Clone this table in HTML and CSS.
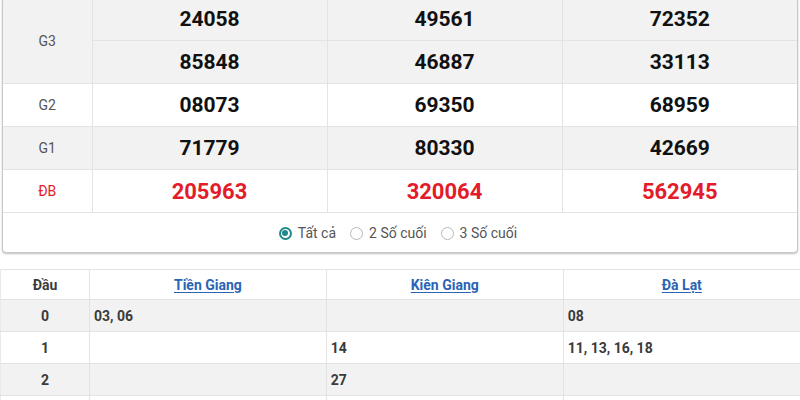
FILE: index.html
```html
<!DOCTYPE html>
<html>
<head>
<meta charset="utf-8">
<link rel="stylesheet" href="styles.css">
</head>
<body>
<div class="page">
  <div class="card">
    <table class="prizes">
      <colgroup><col class="c-label"><col class="c-num"><col class="c-num"><col class="c-num"></colgroup>
      <tr class="gray"><td class="label" rowspan="2">G3</td><td>24058</td><td>49561</td><td>72352</td></tr>
      <tr class="gray"><td>85848</td><td>46887</td><td>33113</td></tr>
      <tr><td class="label">G2</td><td>08073</td><td>69350</td><td>68959</td></tr>
      <tr class="gray"><td class="label">G1</td><td>71779</td><td>80330</td><td>42669</td></tr>
      <tr class="special"><td class="label">ĐB</td><td>205963</td><td>320064</td><td>562945</td></tr>
    </table>
    <div class="filters">
      <label class="opt"><span class="radio on"></span>Tất cả</label>
      <label class="opt"><span class="radio"></span>2 Số cuối</label>
      <label class="opt"><span class="radio"></span>3 Số cuối</label>
    </div>
  </div>

  <table class="heads">
    <colgroup><col class="h-label"><col class="h-col"><col class="h-col"><col class="h-col"></colgroup>
    <tr class="hdr"><th>Đầu</th><th><a href="#">Tiền Giang</a></th><th><a href="#">Kiên Giang</a></th><th><a href="#">Đà Lạt</a></th></tr>
    <tr class="gray"><td class="idx">0</td><td>03, 06</td><td></td><td>08</td></tr>
    <tr><td class="idx">1</td><td></td><td>14</td><td>11, 13, 16, 18</td></tr>
    <tr class="gray"><td class="idx">2</td><td></td><td>27</td><td></td></tr>
    <tr><td class="idx"></td><td></td><td></td><td></td></tr>
  </table>
</div>
</body>
</html>
```

FILE: styles.css
```css
html, body {
  margin: 0;
  padding: 0;
  background: #ffffff;
  font-family: Roboto, "Liberation Sans", Arial, sans-serif;
  overflow: hidden;
}

.page {
  width: 800px;
  margin-top: -3px;
}

.card {
  margin-left: 2px;
  width: 794px;
  border: 1px solid #c9c9c9;
  border-radius: 4px;
  box-shadow: 0 1px 2px rgba(0, 0, 0, 0.25);
  background: #fff;
  overflow: hidden;
}

.prizes {
  width: 100%;
  border-collapse: collapse;
  table-layout: fixed;
  border-style: hidden;
}

.c-label { width: 89px; }

.prizes td {
  height: 42px;
  padding: 0;
  text-align: center;
  vertical-align: middle;
  font-size: 21px;
  font-weight: 700;
  color: #111;
  border: 1px solid #e3e3e3;
}

.prizes tr.gray td { background: #f2f2f2; }

.prizes td.label {
  font-size: 14px;
  font-weight: 400;
  color: #555;
}

.prizes tr.special td {
  color: #e31b2a;
  font-size: 22px;
}

.prizes tr.special td.label {
  font-size: 14px;
  color: #e31b2a;
}

.filters {
  height: 38px;
  border-top: 1px solid #e3e3e3;
  display: flex;
  justify-content: center;
  align-items: center;
  gap: 14px;
  padding-right: 4px;
  padding-top: 1px;
  box-sizing: content-box;
}

.opt {
  display: flex;
  align-items: center;
  gap: 6px;
  font-size: 14px;
  color: #555;
}

.radio {
  width: 11px;
  height: 11px;
  border: 1px solid #b8b8b8;
  border-radius: 50%;
  box-sizing: content-box;
  position: relative;
}

.radio.on {
  border: 2px solid #1f8a8a;
  width: 9px;
  height: 9px;
}

.radio.on::after {
  content: "";
  position: absolute;
  left: 1.5px;
  top: 1.5px;
  width: 6px;
  height: 6px;
  border-radius: 50%;
  background: #1f8a8a;
}

.heads {
  margin-top: 16px;
  width: 800px;
  border-collapse: collapse;
  table-layout: fixed;
  border-top: 1px solid #e3e3e3;
}

.h-label { width: 89px; }

.heads th, .heads td {
  height: 31px;
  padding: 0 4px;
  font-size: 14px;
  font-weight: 700;
  color: #3a3a3a;
  border-bottom: 1px solid #e3e3e3;
  border-left: 1px solid #e3e3e3;
  text-align: left;
  vertical-align: middle;
}

.heads th:first-child, .heads td:first-child { border-left: 1px solid #eaeaea; }

.heads th { text-align: center; height: 29px; }

.heads td.idx { text-align: center; }

.heads tr.gray td { background: #f2f2f2; }

.heads a {
  color: #2a64b5;
  text-decoration: underline;
  text-underline-offset: 2px;
}
```
